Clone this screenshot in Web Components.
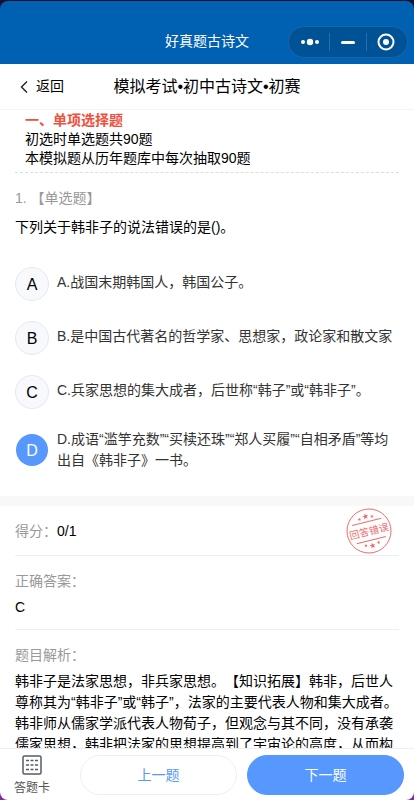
<!DOCTYPE html>
<html lang="zh-CN">
<head>
<meta charset="UTF-8">
<meta name="viewport" content="width=device-width, initial-scale=1.0">
<title>好真题古诗文</title>
<style>
  body {
    margin: 0;
    background: linear-gradient(#1a0f33, #7a2f9c);
    font-family: "Liberation Sans", "Noto Sans CJK SC", sans-serif;
    font-size: 14px;
    line-height: 21px;
    color: #000;
    text-spacing-trim: space-all;
  }
</style>
</head>
<body>
<exam-app>
  <app-header slot="top">好真题古诗文</app-header>
  <page-nav slot="top">模拟考试•初中古诗文•初赛</page-nav>

  <section-intro>
    <span slot="title">一、单项选择题</span>
    初选时单选题共90题<br>本模拟题从历年题库中每次抽取90题
  </section-intro>
  <exam-question number="1" type="单选题">下列关于韩非子的说法错误的是()。</exam-question>
  <answer-options selected="D"></answer-options>

  <result-panel>
    <result-row label="得分：" inline>0/1<wrong-stamp slot="mark"></wrong-stamp></result-row>
    <result-row label="正确答案：">C</result-row>
    <result-row label="题目解析：">韩非子是法家思想，非兵家思想。【知识拓展】韩非，后世人尊称其为“韩非子”或“韩子”，法家的主要代表人物和集大成者。韩非师从儒家学派代表人物荀子，但观念与其不同，没有承袭儒家思想，韩非把法家的思想提高到了宇宙论的高度，从而构</result-row>
  </result-panel>

  <exam-footer slot="bottom"></exam-footer>
</exam-app>

<script>
class ExamApp extends HTMLElement {
  constructor() {
    super();
    this.attachShadow({ mode: 'open' });
    this.shadowRoot.innerHTML = `
      <style>
        :host {
          display: flex;
          flex-direction: column;
          height: 100vh;
          box-sizing: border-box;
          padding-top: 1px;
        }

        header {
          border-radius: 8px 8px 0 0;
          overflow: hidden;
          flex: none;
        }

        main {
          flex: 1;
          min-height: 0;
          overflow-y: auto;
          scrollbar-width: none;
          background: #fff;
        }

        footer {
          flex: none;
          border-radius: 0 0 8px 8px;
          overflow: hidden;
        }
      </style>
      <header><slot name="top"></slot></header>
      <main><slot></slot></main>
      <footer><slot name="bottom"></slot></footer>
    `;
  }
}

class AppHeader extends HTMLElement {
  constructor() {
    super();
    this.attachShadow({ mode: 'open' });
    this.shadowRoot.innerHTML = `
      <style>
        :host {
          display: grid;
          grid-template-columns: 1fr auto 1fr;
          align-items: center;
          height: 63px;
          box-sizing: border-box;
          padding: 18px 6px 0;
          background: #0060b2;
          color: #fff;
        }

        .title {
          grid-column: 2;
        }

        .capsule {
          justify-self: end;
          display: flex;
          align-items: center;
          width: 120px;
          height: 32px;
          box-sizing: border-box;
          padding: 0 3px;
          border: 1px solid #1f63a0;
          border-radius: 16px;
          background: #005296;
        }

        button {
          flex: 1;
          height: 18px;
          padding: 0;
          border: 0;
          background: none;
          display: flex;
          align-items: center;
          justify-content: center;
          cursor: pointer;
        }

        button + button {
          border-left: 1px solid #2b6ca8;
        }
      </style>
      <span class="title"><slot></slot></span>
      <div class="capsule">
        <button aria-label="更多">
          <svg width="20" height="18" fill="#fff"><circle cx="3" cy="9" r="2"/><circle cx="10" cy="9" r="3.2"/><circle cx="17" cy="9" r="2"/></svg>
        </button>
        <button aria-label="最小化">
          <svg width="18" height="18"><path d="M3.5 9.5h11" stroke="#fff" stroke-width="3" stroke-linecap="round"/></svg>
        </button>
        <button aria-label="关闭">
          <svg width="18" height="18"><circle cx="9" cy="9" r="7.5" fill="none" stroke="#fff" stroke-width="2"/><circle cx="9" cy="9" r="3" fill="#fff"/></svg>
        </button>
      </div>
    `;
  }
}

class PageNav extends HTMLElement {
  constructor() {
    super();
    this.attachShadow({ mode: 'open' });
    this.shadowRoot.innerHTML = `
      <style>
        :host {
          display: grid;
          grid-template-columns: 1fr auto 1fr;
          align-items: center;
          height: 46px;
          box-sizing: border-box;
          padding: 0 18px;
          border-bottom: 1px solid #f4f4f4;
          background: #fff;
        }

        a {
          display: flex;
          align-items: center;
          gap: 6px;
          color: #000;
          text-decoration: none;
        }

        h1 {
          margin: 0;
          font-size: 16px;
          font-weight: 400;
        }
      </style>
      <a href="#">
        <svg width="12" height="14" fill="none" stroke="#222" stroke-width="1.4"><path d="M9 1.5 3.5 7 9 12.5"/></svg>
        返回
      </a>
      <h1><slot></slot></h1>
    `;
  }
}

class SectionIntro extends HTMLElement {
  constructor() {
    super();
    this.attachShadow({ mode: 'open' });
    this.shadowRoot.innerHTML = `
      <style>
        :host {
          display: block;
          margin: 0 15px;
          padding: 1px 10px 4px;
          border-bottom: 1px dashed #ddd;
          line-height: 19px;
        }

        h2 {
          margin: 0;
          font-size: 14px;
          font-weight: 700;
          color: #f0503c;
        }
      </style>
      <h2><slot name="title"></slot></h2>
      <slot></slot>
    `;
  }
}

class ExamQuestion extends HTMLElement {
  connectedCallback() {
    this.attachShadow({ mode: 'open' });
    this.shadowRoot.innerHTML = `
      <style>
        :host {
          display: block;
          padding: 15px 15px 0;
        }

        .type {
          margin-bottom: 8px;
          color: #999;
        }
      </style>
      <div class="type">${this.getAttribute('number')}. 【${this.getAttribute('type')}】</div>
      <div><slot></slot></div>
    `;
  }
}

class AnswerOptions extends HTMLElement {
  constructor() {
    super();
    this.attachShadow({ mode: 'open' });
    this.options = [
      { key: 'A', text: '战国末期韩国人，韩国公子。' },
      { key: 'B', text: '是中国古代著名的哲学家、思想家，政论家和散文家' },
      { key: 'C', text: '兵家思想的集大成者，后世称“韩子”或“韩非子”。' },
      { key: 'D', text: '成语“滥竽充数”“买椟还珠”“郑人买履”“自相矛盾”等均出自《韩非子》一书。' }
    ];
  }

  connectedCallback() {
    const selected = this.getAttribute('selected');
    this.shadowRoot.innerHTML = `
      <style>
        :host {
          display: flex;
          flex-direction: column;
          gap: 20px;
          padding: 29px 15px 25px;
          color: #333;
        }

        label {
          display: flex;
          align-items: center;
          gap: 8px;
          cursor: pointer;
        }

        .text {
          min-height: 25px;
        }

        .badge {
          flex: none;
          display: grid;
          place-items: center;
          width: 34px;
          height: 34px;
          font-size: 16px;
          color: #000;
        }

        .badge > * {
          grid-area: 1 / 1;
        }

        input {
          appearance: none;
          width: 34px;
          height: 34px;
          margin: 0;
          border: 1px solid #e6e8ec;
          border-radius: 50%;
          background: #f8f9fc;
        }

        input:checked {
          width: 32px;
          height: 32px;
          border: 0;
          background: #5698ff;
        }

        input:checked + span {
          color: #fff;
        }
      </style>
      ${this.options.map(o => `
        <label>
          <span class="badge">
            <input type="radio" name="answer" value="${o.key}" ${o.key === selected ? 'checked' : ''}>
            <span>${o.key}</span>
          </span>
          <span class="text">${o.key}.${o.text}</span>
        </label>
      `).join('')}
    `;
  }
}

class ResultPanel extends HTMLElement {
  constructor() {
    super();
    this.attachShadow({ mode: 'open' });
    this.shadowRoot.innerHTML = `
      <style>
        :host {
          display: block;
          padding: 0 15px;
          border-top: 10px solid #f8f8f8;
        }
      </style>
      <slot></slot>
    `;
  }
}

class ResultRow extends HTMLElement {
  connectedCallback() {
    this.attachShadow({ mode: 'open' });
    this.shadowRoot.innerHTML = `
      <style>
        :host {
          display: flex;
          flex-direction: column;
          gap: 5px;
          padding: 15px 0 11px;
          border-bottom: 1px solid #eee;
        }

        :host([inline]) {
          flex-direction: row;
          align-items: center;
          gap: 0;
          padding: 2px 7px 1px 0;
        }

        .label {
          color: #999;
        }

        :host([inline]) .value {
          flex: 1;
        }
      </style>
      <span class="label">${this.getAttribute('label')}</span>
      <span class="value"><slot></slot></span>
      <slot name="mark"></slot>
    `;
  }
}

class WrongStamp extends HTMLElement {
  constructor() {
    super();
    this.attachShadow({ mode: 'open' });
    this.shadowRoot.innerHTML = `
      <style>
        :host {
          display: block;
          height: 46px;
        }

        text {
          font-size: 10px;
        }
      </style>
      <svg width="46" height="46" viewBox="-23 -23 46 46" fill="#f26a6a">
        <defs><path id="star" d="M0-3 .8-1 3-.9 1.3.5 1.9 2.6 0 1.4-1.9 2.6-1.3.5-3-.9-.8-1z"/></defs>
        <circle r="22" fill="none" stroke="#f26a6a"/>
        <g transform="rotate(-14)">
          <path d="M-15-9.5h30M-15 9.5h30" stroke="#f26a6a"/>
          <use href="#star" y="-15"/>
          <use href="#star" transform="translate(-6.5 -13.5) scale(.6)"/>
          <use href="#star" transform="translate(6.5 -13.5) scale(.6)"/>
          <use href="#star" y="15"/>
          <use href="#star" transform="translate(-6.5 13.5) scale(.6)"/>
          <use href="#star" transform="translate(6.5 13.5) scale(.6)"/>
          <text y="4" text-anchor="middle">回答错误</text>
        </g>
      </svg>
    `;
  }
}

class ExamFooter extends HTMLElement {
  constructor() {
    super();
    this.attachShadow({ mode: 'open' });
    this.shadowRoot.innerHTML = `
      <style>
        :host {
          display: flex;
          align-items: center;
          gap: 10px;
          padding: 6px 10px 5px 0;
          border-top: 1px solid #eee;
          background: #fff;
        }

        button {
          font: inherit;
          cursor: pointer;
        }

        .card {
          width: 70px;
          padding: 0 6px 0 0;
          border: 0;
          background: none;
          display: flex;
          flex-direction: column;
          align-items: center;
          gap: 3px;
          box-sizing: border-box;
          height: 40px;
          font-size: 12px;
          line-height: 20px;
          color: #555;
        }

        .card svg {
          flex: none;
        }

        .prev,
        .next {
          flex: 1;
          height: 40px;
          border: 1px solid #eee;
          border-radius: 20px;
          background: #fff;
          color: #5698ff;
        }

        .next {
          border-color: #5698ff;
          background: #5698ff;
          color: #fff;
        }
      </style>
      <button class="card">
        <svg width="20" height="20" fill="none" stroke="#555b66">
          <rect x="1" y="1" width="18" height="18" rx="1.5" stroke-width="1.5"/>
          <path d="M4 5.5h3M8.5 5.5h3M13 5.5h3M4 10h3M8.5 10h3M13 10h3M4 14.5h3M8.5 14.5h3M13 14.5h3" stroke-width="1.4"/>
        </svg>
        答题卡
      </button>
      <button class="prev">上一题</button>
      <button class="next">下一题</button>
    `;
  }
}

customElements.define('exam-app', ExamApp);
customElements.define('app-header', AppHeader);
customElements.define('page-nav', PageNav);
customElements.define('section-intro', SectionIntro);
customElements.define('exam-question', ExamQuestion);
customElements.define('answer-options', AnswerOptions);
customElements.define('result-panel', ResultPanel);
customElements.define('result-row', ResultRow);
customElements.define('wrong-stamp', WrongStamp);
customElements.define('exam-footer', ExamFooter);
</script>
</body>
</html>
